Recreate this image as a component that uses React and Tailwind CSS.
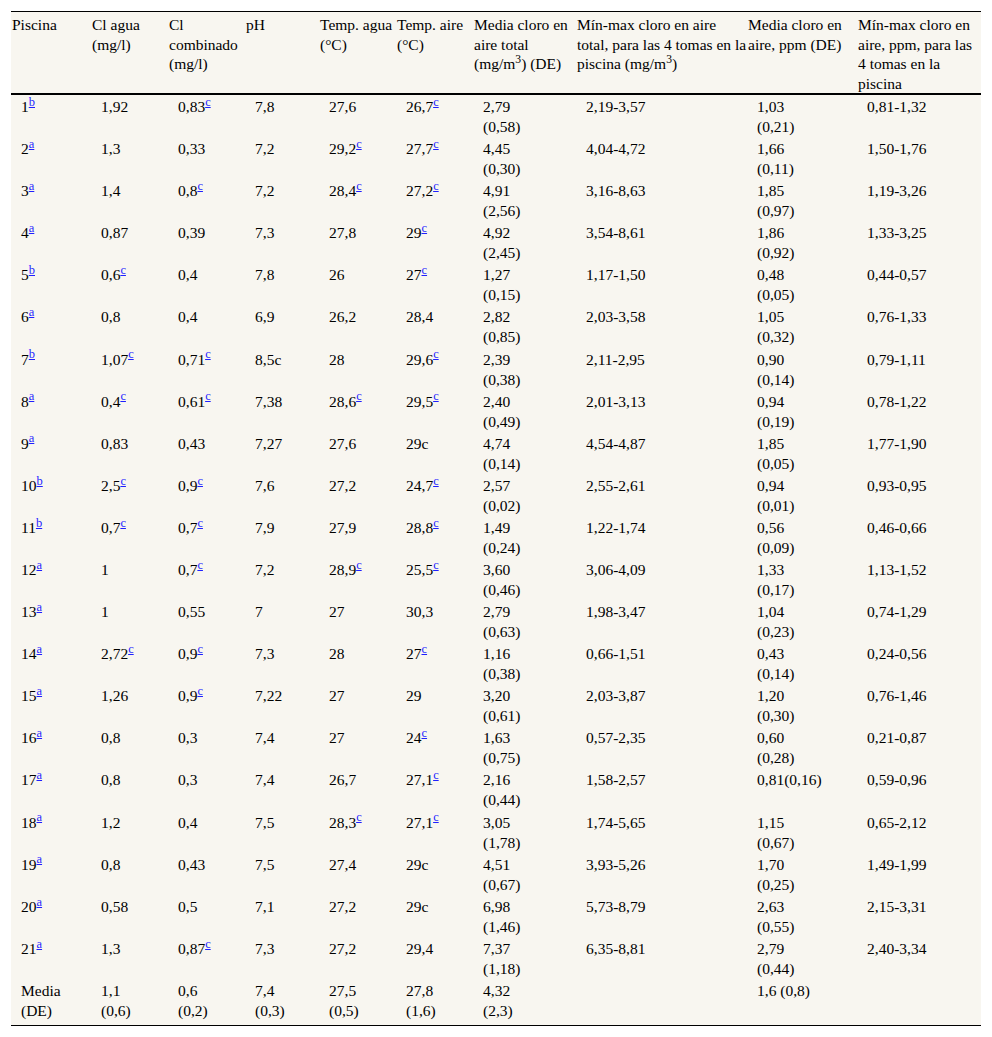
import React from "react";

const rows = [
  ["1|b", "1,92", "0,83|c", "7,8", "27,6", "26,7|c", ["2,79", "(0,58)"], "2,19-3,57", ["1,03", "(0,21)"], "0,81-1,32"],
  ["2|a", "1,3", "0,33", "7,2", "29,2|c", "27,7|c", ["4,45", "(0,30)"], "4,04-4,72", ["1,66", "(0,11)"], "1,50-1,76"],
  ["3|a", "1,4", "0,8|c", "7,2", "28,4|c", "27,2|c", ["4,91", "(2,56)"], "3,16-8,63", ["1,85", "(0,97)"], "1,19-3,26"],
  ["4|a", "0,87", "0,39", "7,3", "27,8", "29|c", ["4,92", "(2,45)"], "3,54-8,61", ["1,86", "(0,92)"], "1,33-3,25"],
  ["5|b", "0,6|c", "0,4", "7,8", "26", "27|c", ["1,27", "(0,15)"], "1,17-1,50", ["0,48", "(0,05)"], "0,44-0,57"],
  ["6|a", "0,8", "0,4", "6,9", "26,2", "28,4", ["2,82", "(0,85)"], "2,03-3,58", ["1,05", "(0,32)"], "0,76-1,33"],
  ["7|b", "1,07|c", "0,71|c", "8,5c", "28", "29,6|c", ["2,39", "(0,38)"], "2,11-2,95", ["0,90", "(0,14)"], "0,79-1,11"],
  ["8|a", "0,4|c", "0,61|c", "7,38", "28,6|c", "29,5|c", ["2,40", "(0,49)"], "2,01-3,13", ["0,94", "(0,19)"], "0,78-1,22"],
  ["9|a", "0,83", "0,43", "7,27", "27,6", "29c", ["4,74", "(0,14)"], "4,54-4,87", ["1,85", "(0,05)"], "1,77-1,90"],
  ["10|b", "2,5|c", "0,9|c", "7,6", "27,2", "24,7|c", ["2,57", "(0,02)"], "2,55-2,61", ["0,94", "(0,01)"], "0,93-0,95"],
  ["11|b", "0,7|c", "0,7|c", "7,9", "27,9", "28,8|c", ["1,49", "(0,24)"], "1,22-1,74", ["0,56", "(0,09)"], "0,46-0,66"],
  ["12|a", "1", "0,7|c", "7,2", "28,9|c", "25,5|c", ["3,60", "(0,46)"], "3,06-4,09", ["1,33", "(0,17)"], "1,13-1,52"],
  ["13|a", "1", "0,55", "7", "27", "30,3", ["2,79", "(0,63)"], "1,98-3,47", ["1,04", "(0,23)"], "0,74-1,29"],
  ["14|a", "2,72|c", "0,9|c", "7,3", "28", "27|c", ["1,16", "(0,38)"], "0,66-1,51", ["0,43", "(0,14)"], "0,24-0,56"],
  ["15|a", "1,26", "0,9|c", "7,22", "27", "29", ["3,20", "(0,61)"], "2,03-3,87", ["1,20", "(0,30)"], "0,76-1,46"],
  ["16|a", "0,8", "0,3", "7,4", "27", "24|c", ["1,63", "(0,75)"], "0,57-2,35", ["0,60", "(0,28)"], "0,21-0,87"],
  ["17|a", "0,8", "0,3", "7,4", "26,7", "27,1|c", ["2,16", "(0,44)"], "1,58-2,57", "0,81(0,16)", "0,59-0,96"],
  ["18|a", "1,2", "0,4", "7,5", "28,3|c", "27,1|c", ["3,05", "(1,78)"], "1,74-5,65", ["1,15", "(0,67)"], "0,65-2,12"],
  ["19|a", "0,8", "0,43", "7,5", "27,4", "29c", ["4,51", "(0,67)"], "3,93-5,26", ["1,70", "(0,25)"], "1,49-1,99"],
  ["20|a", "0,58", "0,5", "7,1", "27,2", "29c", ["6,98", "(1,46)"], "5,73-8,79", ["2,63", "(0,55)"], "2,15-3,31"],
  ["21|a", "1,3", "0,87|c", "7,3", "27,2", "29,4", ["7,37", "(1,18)"], "6,35-8,81", ["2,79", "(0,44)"], "2,40-3,34"],
  [["Media", "(DE)"], ["1,1", "(0,6)"], ["0,6", "(0,2)"], ["7,4", "(0,3)"], ["27,5", "(0,5)"], ["27,8", "(1,6)"], ["4,32", "(2,3)"], "", "1,6 (0,8)", ""],
];

function Piece({ s }) {
  if (s.includes("|")) {
    const [t, n] = s.split("|");
    return (
      <>
        {t}
        <sup className="text-[12.5px]">
          <a href="#" className="text-[#1f1fff] underline">
            {n}
          </a>
        </sup>
      </>
    );
  }
  return <>{s}</>;
}

function Cell({ v }) {
  if (Array.isArray(v)) {
    return (
      <>
        {v.map((s, i) => (
          <React.Fragment key={i}>
            {i > 0 && <br />}
            <Piece s={s} />
          </React.Fragment>
        ))}
      </>
    );
  }
  return <Piece s={v} />;
}

const headers = [
  ["Piscina"],
  ["Cl agua", "(mg/l)"],
  ["Cl", "combinado", "(mg/l)"],
  ["pH"],
  ["Temp. agua", "(°C)"],
  ["Temp. aire", "(°C)"],
  ["Media cloro en", "aire total", "M3"],
  ["Mín-max cloro en aire", "total, para las 4 tomas en la", "P3"],
  ["Media cloro en", "aire, ppm (DE)"],
  ["Mín-max cloro en", "aire, ppm, para las", "4 tomas en la", "piscina"],
];

function HeaderLine({ s }) {
  if (s === "M3")
    return (
      <>
        (mg/m<sup>3</sup>) (DE)
      </>
    );
  if (s === "P3")
    return (
      <>
        piscina (mg/m<sup>3</sup>)
      </>
    );
  return <>{s}</>;
}

const widths = [80, 77, 77, 74, 77, 77, 103, 171, 110, 124];

export default function App() {
  return (
    <div className="min-h-[1037px] bg-white pt-[11px] pl-[11px] font-['Liberation_Serif',serif] text-[15.5px] text-black">
      <table className="table-fixed w-[970px] bg-[#f8f6f0] border-t border-black font-['Liberation_Serif',serif]">
        <colgroup>
          {widths.map((w, i) => (
            <col key={i} style={{ width: w }} />
          ))}
        </colgroup>
        <thead>
          <tr>
            {headers.map((h, i) => (
              <th
                key={i}
                className="border-b-2 border-black pl-[1px] pt-[3px] pb-0 text-left align-top font-normal whitespace-nowrap leading-[19.6px] font-['Liberation_Serif',serif]"
              >
                {h.map((s, j) => (
                  <React.Fragment key={j}>
                    {j > 0 && <br />}
                    <HeaderLine s={s} />
                  </React.Fragment>
                ))}
                {h.length < 4 &&
                  Array.from({ length: 4 - h.length }).map((_, k) => (
                    <React.Fragment key={"e" + k}>
                      <br />
                      {"\u00a0"}
                    </React.Fragment>
                  ))}
              </th>
            ))}
          </tr>
        </thead>
        <tbody>
          {rows.map((r, ri) => {
            const last = ri === rows.length - 1;
            return (
              <tr key={ri} className={last ? "border-b border-black" : ""}>
                {r.map((v, ci) => (
                  <td
                    key={ci}
                    className={
                      last
                        ? "pl-[10px] pt-[1.6px] pb-[4px] align-top whitespace-nowrap leading-[20px] font-['Liberation_Serif',serif]"
                        : "pl-[10px] pt-[1.6px] pb-[0.5px] align-top whitespace-nowrap leading-[20px] font-['Liberation_Serif',serif]"
                    }
                  >
                    <Cell v={v} />
                    {!Array.isArray(v) && (
                      <>
                        <br />
                        {"\u00a0"}
                      </>
                    )}
                  </td>
                ))}
              </tr>
            );
          })}
        </tbody>
      </table>
    </div>
  );
}
